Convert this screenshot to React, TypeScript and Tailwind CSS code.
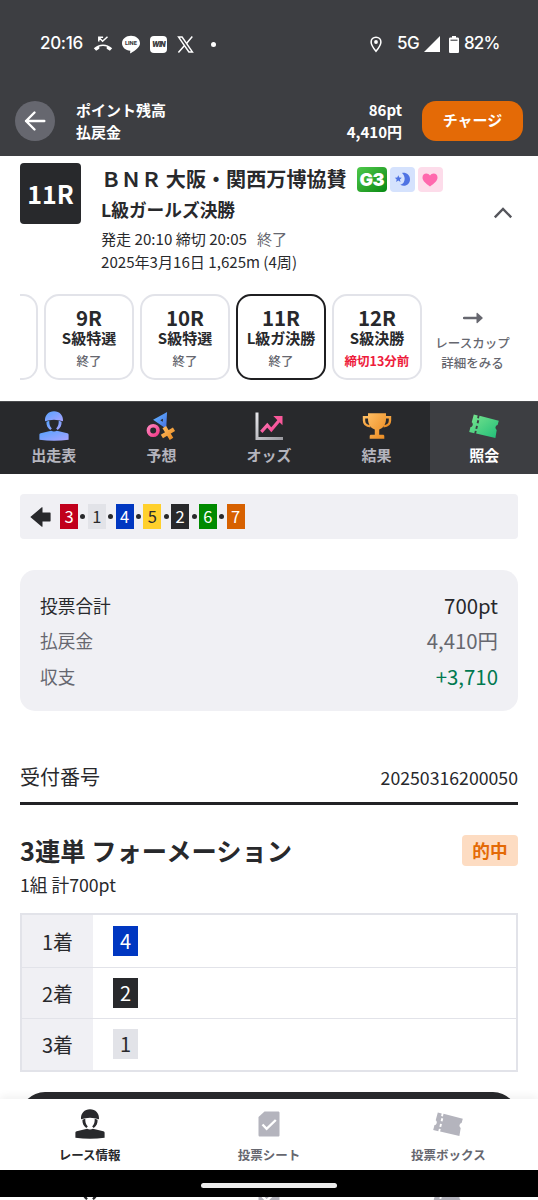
import { ReactNode } from 'react';

const races = [
  { no: '9R', grade: 'S級特選', status: '終了' },
  { no: '10R', grade: 'S級特選', status: '終了' },
  { no: '11R', grade: 'L級ガ決勝', status: '終了', current: true },
  { no: '12R', grade: 'S級決勝', status: '締切13分前', open: true },
];

const numberColors: Record<number, string> = {
  1: 'bg-[#e2e3e8] text-[#2a2a2c]',
  2: 'bg-[#28292c] text-white',
  3: 'bg-[#c1001c] text-white',
  4: 'bg-[#0037c1] text-white',
  5: 'bg-[#ffd02c] text-[#2a2a2c]',
  6: 'bg-[#008a00] text-white',
  7: 'bg-[#d76100] text-white',
};

const lineup = [3, 1, 4, 5, 2, 6, 7];

const formation = [
  { place: '1着', number: 4 },
  { place: '2着', number: 2 },
  { place: '3着', number: 1 },
];

const RacerIcon = ({ fill }: { fill: string }) => (
  <svg width="30" height="30" viewBox="0 0 30 30" fill={fill}>
    <path d="M6 10.300C5.600 4 9.500.2 15 .2s9.400 3.800 9 10.100c-2.900-1-5.900-1.500-9-1.500s-6.100.5-9 1.500Z" />
    <path d="M7.400 10.800 10.300 9.800c-.1 3.400.4 5.400 2.500 7.600l-1.500 1.500c-2.900-1.900-4-4.500-3.900-8.100ZM22.600 10.800 19.700 9.800c.1 3.400-.4 5.400-2.500 7.600l1.500 1.500c2.900-1.900 4-4.500 3.900-8.100Z" />
    <path d="M.4 28.700V23.900c0-1 .4-1.400 1.300-1.600l10.400-2.600c1.900 1.100 3.900 1.100 5.800 0l10.400 2.600c.9.2 1.300.6 1.300 1.600v4.800c-9.700 1.300-19.500 1.300-29.200 0Z" />
  </svg>
);

// perforation takes the text color so it blends with whatever is behind
const TicketIcon = ({ fill }: { fill: string }) => (
  <svg width="30" height="25" viewBox="0 0 30 25" fill={fill}>
    <path d="M4.800.4 8.700 1.400 8.100 4 9.900 4.400 10.500 1.800 29.800 6.800 28.600 11.100c-2.300.5-2.900 3.400-.9 5l-1.300 7.800L7.100 19.600 7.700 17.100 5.900 16.700 5.300 19.200.2 17.900 1.500 13.100c2.500-.4 3.100-3.500 1.200-4.900Z" />
    <path d="M9.300 6.200 8.600 9.200M8 11.900 7.300 14.900" stroke="currentColor" strokeWidth="1.9" />
  </svg>
);

const SheetIcon = () => (
  <svg width="22" height="26" viewBox="0 0 22 26">
    <path d="M6.500.5H20c1 0 1.500.5 1.500 1.500V24c0 1-.5 1.500-1.500 1.500H2C1 25.500.5 25 .5 24V6Z" fill="#b4b4bd" />
    <path d="m4.500 13.500 4.100 4.300L17.800 9" fill="none" stroke="#fff" strokeWidth="2.400" />
  </svg>
);

const PredictionIcon = () => (
  <svg width="30" height="30" viewBox="0 0 30 30" fill="none">
    <path d="M19 4.300 10.700 9 18.500 14.300Z" stroke="url(#blue)" strokeWidth="3.800" />
    <circle cx="7.200" cy="19.500" r="4.800" stroke="url(#pink)" strokeWidth="3.600" />
    <path d="m18.300 16.200 7.200 11.600M28 18.300 15.900 25.500" stroke="url(#gold)" strokeWidth="4.200" />
  </svg>
);

const OddsIcon = () => (
  <svg width="30" height="30" viewBox="0 0 30 30" fill="none">
    <path d="M3 1.500v26h26" stroke="url(#silver)" strokeWidth="3" />
    <path d="m7.300 20.800 6-6.600 4 4.500 8.700-10.200" stroke="url(#pink)" strokeWidth="3.200" />
    <path d="M19.300 5h9.200v9.200Z" fill="#f9589a" />
  </svg>
);

const TrophyIcon = () => (
  <svg width="30" height="28" viewBox="0 0 30 28" fill="none">
    <path d="M7 5.300H2v3.200c0 3.500 2.200 5.500 6.500 5.700M23 5.300h5v3.200c0 3.500-2.200 5.500-6.500 5.700" stroke="url(#gold)" strokeWidth="2.400" />
    <path d="M6 1.200h18v5.600c0 5.200-2.400 9.300-6.800 10.600v5.400h3.600c1 0 1.500.5 1.500 1.500v2.500H7.700v-2.500c0-1 .5-1.500 1.500-1.500h3.600v-5.400C8.400 16.100 6 12 6 6.800Z" fill="url(#gold)" />
  </svg>
);

const Gradients = () => (
  <svg width="0" height="0" className="absolute">
    <defs>
      <linearGradient id="blue" x1="0" y1="0" x2="1" y2="1">
        <stop offset="0" stopColor="#5eaaff" />
        <stop offset="1" stopColor="#4b7be6" />
      </linearGradient>
      <linearGradient id="racer" x1="0" y1="0" x2="1" y2="1">
        <stop offset="0" stopColor="#55a2ff" />
        <stop offset="1" stopColor="#a9a4ff" />
      </linearGradient>
      <linearGradient id="pink" x1="0" y1="0" x2="1" y2="1">
        <stop offset="0" stopColor="#ff83bd" />
        <stop offset="1" stopColor="#f23c88" />
      </linearGradient>
      <linearGradient id="gold" x1="0" y1="0" x2="1" y2="1">
        <stop offset="0" stopColor="#ffbd62" />
        <stop offset="1" stopColor="#ea8a20" />
      </linearGradient>
      <linearGradient id="silver" x1="0" y1="0" x2="1" y2="1">
        <stop offset="0" stopColor="#e6e6ea" />
        <stop offset="1" stopColor="#9a9aa0" />
      </linearGradient>
      <linearGradient id="green" x1="0" y1="0" x2="1" y2="1">
        <stop offset="0" stopColor="#7be58e" />
        <stop offset="1" stopColor="#1fbd78" />
      </linearGradient>
    </defs>
  </svg>
);

const StatusBar = () => (
  <div className="flex h-[87px] items-center pl-10 pr-10 pt-px font-['Inter'] text-[17px] font-medium text-white">
    <span className="w-[44px] tracking-[-0.3px]">20:16</span>
    <svg width="20" height="16" viewBox="0 0 20 16" fill="none" className="ml-[9px]">
      <path d="M.8 12.300C6 7.200 14 7.200 19.200 12.300L16.900 14.700 13.700 12.800V10.500C11.200 9.800 8.800 9.800 6.300 10.500v2.300L3.100 14.700Z" fill="#fff" />
      <path d="M5.800 5.500V1.300h4.300M6 1.500l3.600 3.800L14.500.8" stroke="#fff" strokeWidth="1.500" />
    </svg>
    <svg width="20" height="19" viewBox="0 0 20 19" className="ml-2">
      <path d="M10 .7c5 0 9 3.300 9 7.600 0 3.800-4.300 7-9.300 9.900-.5.2-.7 0-.6-.5l.2-1.900C4.500 15.600 1 12.400 1 8.300 1 4 5 .7 10 .7Z" fill="#fff" />
      <text x="10" y="10.300" textAnchor="middle" fontSize="5.400" fontWeight="800" fill="#3d3e42">LINE</text>
    </svg>
    <span className="ml-[9px] flex h-[17px] w-[17px] items-center justify-center rounded-[4px] bg-white text-[7px] font-black italic leading-none tracking-[-0.7px] text-[#3d3e42]">
      WIN
    </span>
    <svg width="17" height="17" viewBox="0 0 17 17" fill="none" className="ml-[10px]">
      <path d="M1.500 1h3.600l10.400 15h-3.600Z" stroke="#fff" strokeWidth="1.400" />
      <path d="M15.300.6 9.500 7.400M7.300 9.800 1.400 16.500" stroke="#fff" strokeWidth="1.500" />
    </svg>
    <span className="ml-[17px] h-[5px] w-[5px] rounded-full bg-white" />
    <svg width="12" height="17" viewBox="0 0 12 17" fill="none" className="ml-auto">
      <path d="M6 1.200c2.900 0 4.900 2.100 4.900 4.700C10.900 9.200 6 15.300 6 15.300S1.100 9.200 1.100 5.900C1.100 3.300 3.100 1.200 6 1.200Z" stroke="#fff" strokeWidth="1.500" />
      <circle cx="6" cy="6" r="1.900" fill="#fff" />
    </svg>
    <span className="ml-[15px] w-[23px] text-[17px] tracking-[-0.5px]">5G</span>
    <svg width="16" height="16" viewBox="0 0 16 16" className="ml-1">
      <path d="M16 0v16H0Z" fill="#fff" />
    </svg>
    <svg width="10" height="17" viewBox="0 0 10 17" className="ml-[9px]">
      <path d="M3 0h4v1.500h1.500c1 0 1.500.5 1.500 1.500v12.500c0 1-.5 1.500-1.500 1.500h-7C.5 17 0 16.500 0 15.500V3c0-1 .5-1.500 1.500-1.500H3Z" fill="#fff" />
      <path d="M1.500 4.200h7" stroke="#3d3e42" strokeWidth="1.100" />
    </svg>
    <span className="ml-[5px] w-[34px] whitespace-nowrap text-[17px] tracking-[-0.9px]">82%</span>
  </div>
);

const Header = () => (
  <div className="flex h-[69px] items-center pb-px pl-[15px] pr-[15px] text-white">
    <button className="flex h-10 w-10 items-center justify-center rounded-full bg-[#66676f]">
      <svg width="22" height="22" viewBox="0 0 22 22" fill="none" stroke="#fff" strokeWidth="2.400" strokeLinecap="round" strokeLinejoin="round">
        <path d="M20.300 11H2M10.500 2.500 2 11l8.500 8.500" />
      </svg>
    </button>
    <div className="ml-[21px] text-[15px] font-bold leading-[22.5px]">
      <p>ポイント残高</p>
      <p>払戻金</p>
    </div>
    <div className="ml-auto text-right text-[15px] font-bold leading-[22.5px]">
      <p>86pt</p>
      <p>4,410円</p>
    </div>
    <button className="ml-5 h-10 w-[101px] rounded-[14px] bg-[#e46a06] pb-0.5 text-[15px] font-bold">チャージ</button>
  </div>
);

const RaceInfo = () => (
  <div className="flex pl-5 pr-[25px] pt-[7px] text-[#28292c]">
    <div className="flex h-[61px] w-[61px] shrink-0 items-center justify-center rounded-[4px] bg-[#28292c] text-[25px] font-bold text-white">
      11R
    </div>
    <div className="ml-5 h-[110px] whitespace-nowrap pt-px">
      <div className="flex h-[30px] items-center">
        <h1 className="text-[20.1px] font-bold leading-[30px]">ＢＮＲ 大阪・関西万博協賛</h1>
        <span className="ml-[10px] mt-px flex h-[25px] w-[30px] items-center justify-center rounded-[4px] bg-linear-to-br from-[#4dc94a] to-[#008a10] font-['Inter'] text-[18px] font-black leading-none tracking-[-0.5px] text-white">
          G3
        </span>
        <span className="ml-[3px] mt-px flex h-[25px] w-[25px] items-center justify-center rounded-[4px] bg-[#d5e2fd]">
          <svg width="17" height="15" viewBox="0 0 17 15" fill="#4f73e3">
            <path d="M8 .9C12 .1 16 2.700 16 7.200c0 5.300-5 8.200-9.700 5.600C11.200 12 12.200 4.500 8 .9Z" />
            <path d="m4.300 3.300 1 2.300 2.500.2-1.900 1.600.6 2.500-2.200-1.300-2.200 1.300.6-2.500L.8 5.800l2.500-.2Z" />
          </svg>
        </span>
        <span className="ml-[3px] mt-px flex h-[25px] w-[25px] items-center justify-center rounded-[4px] bg-[#fddcea]">
          <svg width="16" height="14" viewBox="0 0 16 14" fill="#ff68ad">
            <path d="M8 13.500C3.500 10.200.5 7.800.5 4.500.5 2.200 2.200.6 4.300.6 5.800.6 7.200 1.300 8 2.600 8.800 1.300 10.200.6 11.700.6c2.100 0 3.800 1.600 3.800 3.900 0 3.300-3 5.700-7.500 9Z" />
          </svg>
        </span>
      </div>
      <h2 className="text-[17.7px] font-bold leading-[30px]">L級ガールズ決勝</h2>
      <p className="mt-[3px] text-[15.1px] leading-[23px]">
        発走 20:10 締切 20:05<span className="ml-2.5 text-[#66676f]">終了</span>
      </p>
      <p className="text-[15.1px] leading-[23px]">2025年3月16日 1,625m (4周)</p>
    </div>
    <svg width="20" height="12" viewBox="0 0 20 12" fill="none" className="ml-auto mt-[44px]">
      <path d="m1.800 10.300 8.200-8.300 8.200 8.300" stroke="#55565c" strokeWidth="2.400" />
    </svg>
  </div>
);

const RaceList = () => (
  <div className="ml-5 mt-[21px] flex h-[86px] overflow-hidden whitespace-nowrap text-center text-[#28292c]">
    <div className="w-[18px] shrink-0 rounded-r-[15px] border-2 border-l-0 border-[#e2e3e9]" />
    {races.map((race) => (
      <div
        key={race.no}
        className={`ml-1.5 w-[90px] shrink-0 rounded-[15px] border-2 pt-[9px] ${
          race.current ? 'border-[#1f1f21]' : 'border-[#e2e3e9]'
        }`}
      >
        <p className="text-[20.5px] font-bold leading-6">{race.no}</p>
        <p className="text-[15px] font-bold leading-[18px]">{race.grade}</p>
        <p
          className={`mt-1 text-[12.5px] leading-5 ${
            race.open ? 'font-bold text-[#ee1c3c]' : 'font-medium text-[#66676f]'
          }`}
        >
          {race.status}
        </p>
      </div>
    ))}
    <div className="ml-[13px] flex w-[75px] flex-col items-center pt-[18px] text-[12.5px] font-medium leading-[19.5px] text-[#66676f]">
      <svg width="20" height="12" viewBox="0 0 20 12">
        <path d="M1 6h13" stroke="#66676f" strokeWidth="2.400" strokeLinecap="round" />
        <path d="M13.500 1.500c0-.8.500-1 1-.5l5 4.500c.4.300.4.700 0 1l-5 4.500c-.5.500-1 .3-1-.5Z" fill="#66676f" />
      </svg>
      <p className="mt-[9px]">レースカップ</p>
      <p>詳細をみる</p>
    </div>
  </div>
);

const Tab = ({ icon, label, active }: { icon: ReactNode; label: string; active?: boolean }) => (
  <button
    className={`flex flex-1 flex-col items-center pt-2 text-[15px] font-bold leading-[22px] ${
      active ? 'bg-[#3d3e42] text-white' : 'text-[#b4b4bd]'
    }`}
  >
    <span className="flex h-8 items-center justify-center">{icon}</span>
    <span className="mt-0.5">{label}</span>
  </button>
);

const Lineup = () => (
  <div className="mx-5 mt-5 flex h-[45px] items-center rounded-[4px] bg-[#f0f0f4] pl-2.5">
    <svg width="21" height="20" viewBox="0 0 21 20" fill="#28292c">
      <path d="M.3 10 11.800.3c.4-.3.700-.2.700.3v5H20c.4 0 .6.200.6.600v7.600c0 .4-.2.600-.6.600h-7.500v5c0 .5-.3.600-.7.300Z" />
    </svg>
    <div className="ml-[9px] flex items-center">
      {lineup.map((n, i) => (
        <div key={n} className="flex items-center">
          {i > 0 && <span className="mx-[2.4px] h-[5px] w-[5px] rounded-full bg-[#28292c]" />}
          <span className={`flex h-[25px] w-[18px] items-center justify-center text-[16.5px] leading-none ${numberColors[n]}`}>{n}</span>
        </div>
      ))}
    </div>
  </div>
);

const Summary = () => (
  <div className="mx-5 mt-[31px] flex h-[141px] flex-col justify-center rounded-[15px] bg-[#f0f0f4] px-5 pt-px text-[17.7px] leading-[35.5px]">
    <div className="flex justify-between text-[#28292c]">
      <span>投票合計</span>
      <span className="text-[20.4px]">700pt</span>
    </div>
    <div className="flex justify-between text-[#66676f]">
      <span>払戻金</span>
      <span className="text-[20.4px]">4,410円</span>
    </div>
    <div className="flex justify-between text-[#66676f]">
      <span>収支</span>
      <span className="text-[20.4px] text-[#007950]">+3,710</span>
    </div>
  </div>
);

const Ticket = () => (
  <div className="mx-5 mt-[51px] text-[#28292c]">
    <div className="flex h-[43px] items-center justify-between border-b-[3px] border-[#222225] pb-2.5">
      <span className="text-[20px] leading-[30px]">受付番号</span>
      <span className="text-[17.7px] leading-[30px]">20250316200050</span>
    </div>
    <div className="mt-[30px] flex h-[31px] items-center justify-between">
      <h2 className="text-[25.3px] font-bold">3連単 フォーメーション</h2>
      <span className="flex h-[31px] w-14 items-center justify-center rounded-[4px] bg-[#fddcc2] text-[17.7px] font-bold leading-none text-[#e46a06]">的中</span>
    </div>
    <p className="mt-1 text-[17.7px] leading-[29px]">1組 計700pt</p>
    <div className="mt-[14px] border-2 border-[#e2e3e9] text-[20px]">
      {formation.map((row, i) => (
        <div key={row.place} className={`flex h-[51.5px] ${i > 0 ? 'border-t border-[#e2e3e9]' : ''}`}>
          <div className="flex w-[71px] items-center justify-center bg-[#f0f0f4] pt-0.5">{row.place}</div>
          <div className="flex items-center pl-5">
            <span className={`flex h-[30px] w-[25px] items-center justify-center leading-none ${numberColors[row.number]}`}>{row.number}</span>
          </div>
        </div>
      ))}
    </div>
    <div className="mt-5 h-[60px] rounded-[25px] bg-[#28292c]" />
  </div>
);

const NavItem = ({ icon, label, active }: { icon: ReactNode; label?: string; active?: boolean }) => (
  <div className={`flex flex-1 flex-col items-center pt-[9px] text-[12.5px] font-bold ${active ? 'text-[#28292c]' : 'text-[#66676f]'}`}>
    <span className="flex h-8 items-center justify-center text-white">{icon}</span>
    {label && <span className="mt-1.5 leading-[18px]">{label}</span>}
  </div>
);

const BottomNav = ({ labels = true }: { labels?: boolean }) => (
  <div className="flex h-[71px] bg-white">
    <NavItem icon={<RacerIcon fill="#28292c" />} label={labels ? 'レース情報' : undefined} active />
    <NavItem icon={<SheetIcon />} label={labels ? '投票シート' : undefined} />
    <NavItem icon={<TicketIcon fill="#b4b4bd" />} label={labels ? '投票ボックス' : undefined} />
  </div>
);

const App = () => {
  return (
    <div className="flex h-[1200px] w-[538px] flex-col overflow-hidden bg-white font-['Noto_Sans_CJK_JP',sans-serif]">
      <Gradients />
      <header className="h-[156px] shrink-0 bg-[#3d3e42]">
        <StatusBar />
        <Header />
      </header>
      <main className="h-[943px] shrink-0 overflow-hidden">
        <section className="h-[245px]">
          <RaceInfo />
          <RaceList />
        </section>
        <nav className="flex h-[73px] border-t border-[#4a4b4e] bg-[#28292c]">
          <Tab icon={<RacerIcon fill="url(#racer)" />} label="出走表" />
          <Tab icon={<PredictionIcon />} label="予想" />
          <Tab icon={<OddsIcon />} label="オッズ" />
          <Tab icon={<TrophyIcon />} label="結果" />
          <Tab icon={<span className="text-[#3d3e42]"><TicketIcon fill="url(#green)" /></span>} label="照会" active />
        </nav>
        <Lineup />
        <Summary />
        <Ticket />
      </main>
      <footer className="relative shrink-0 shadow-[0_-3px_8px_rgba(0,0,0,0.06)]">
        <BottomNav />
        <div className="flex h-[27px] items-center justify-center bg-black pt-[3px]">
          <div className="h-[5px] w-[136px] rounded-full bg-[#ececec]" />
        </div>
        {/* page bottom peeking out below the gesture bar */}
        <div className="h-[3px] overflow-hidden">
          <div className="-mt-[26px]">
            <BottomNav labels={false} />
          </div>
        </div>
      </footer>
    </div>
  );
};

export default App;
